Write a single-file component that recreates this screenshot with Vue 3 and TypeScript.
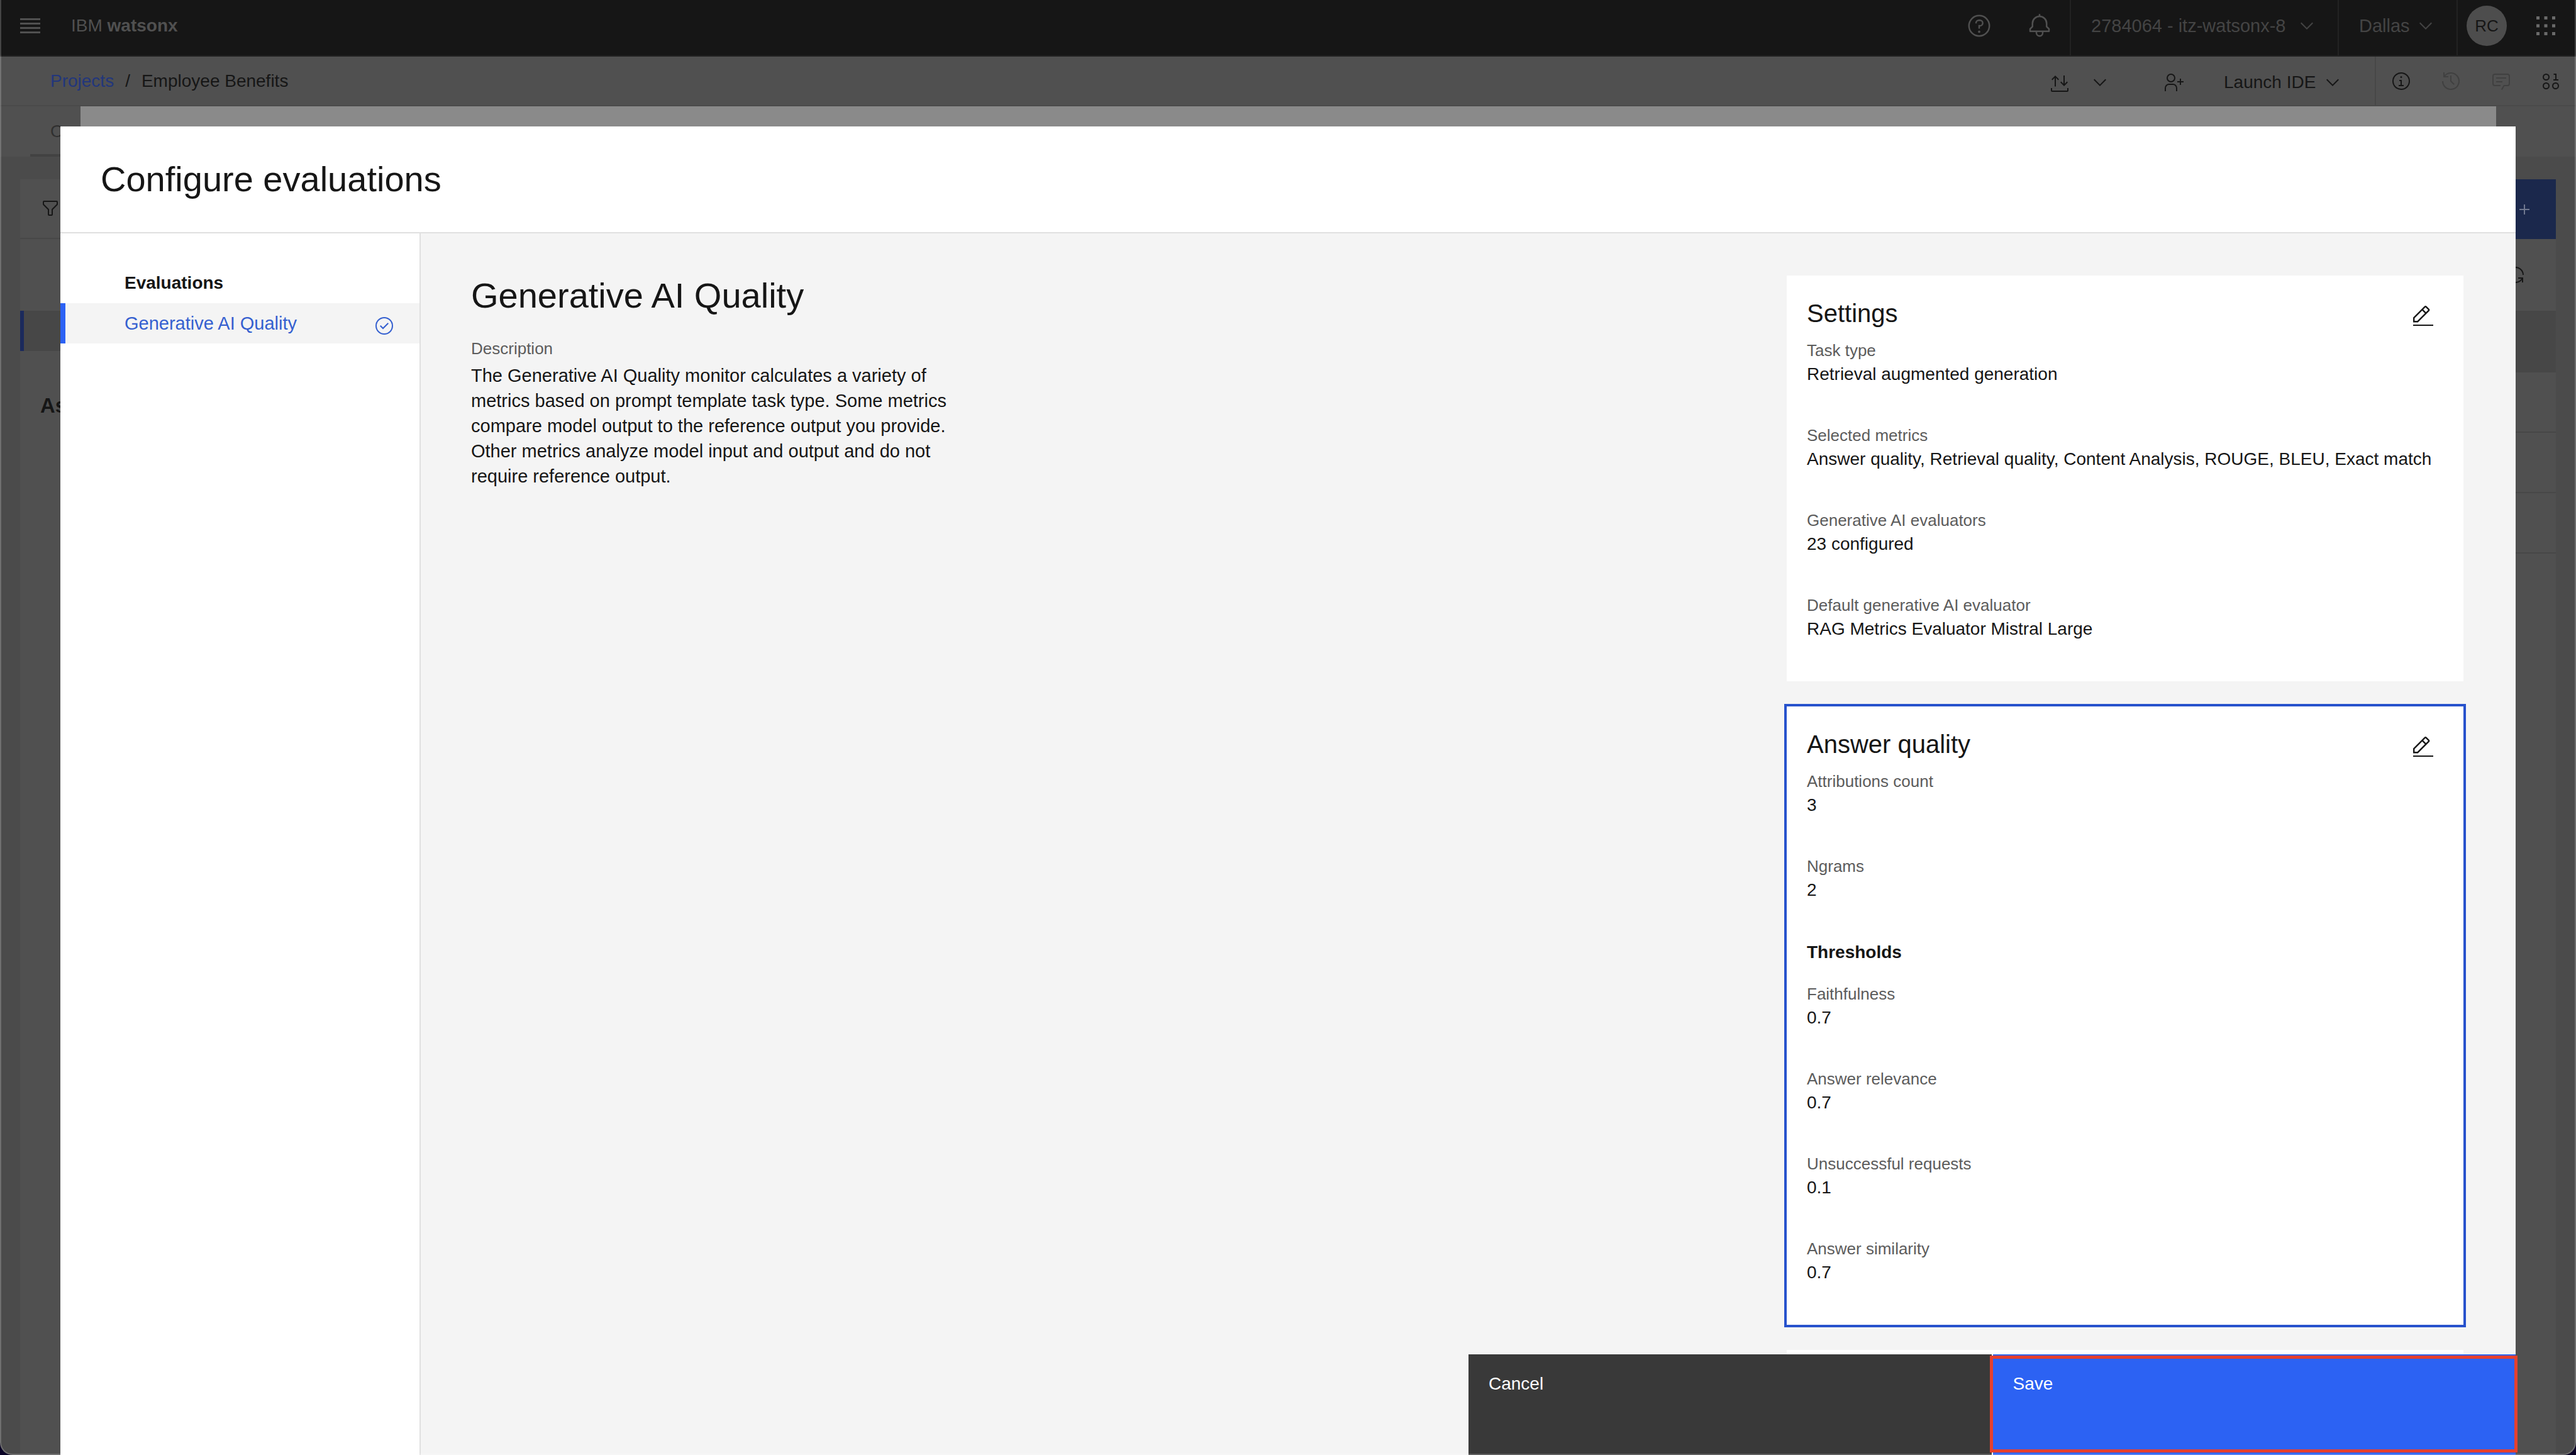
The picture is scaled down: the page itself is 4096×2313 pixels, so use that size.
<script setup lang="ts">
import { h } from 'vue'

interface Field {
  label: string
  value: string
}

interface Card {
  title: string
  fields: Field[]
  thresholds: Field[]
  active: boolean
}

const RING = 'M16 2a14 14 0 1 0 14 14A14 14 0 0 0 16 2zm0 26a12 12 0 1 1 12-12 12 12 0 0 1-12 12z'

const icons: Record<string, string[]> = {
  menu: ['M0 4h32v3H0zM0 11h32v3H0zM0 18h32v3H0zM0 25h32v3H0z'],
  help: [
    RING,
    'M16 22a1.5 1.5 0 1 0 1.5 1.5A1.5 1.5 0 0 0 16 22z',
    'M17 8h-1.500A4.490 4.490 0 0 0 11 12.500V13h2v-.5A2.500 2.500 0 0 1 15.500 10H17a2.500 2.500 0 0 1 0 5h-2v4.500h2V17a4.500 4.500 0 0 0 0-9z',
  ],
  bell: [
    'M28.707 19.293L26 16.586V13a10.014 10.014 0 0 0-9-9.950V1h-2v2.050A10.014 10.014 0 0 0 6 13v3.586l-2.707 2.707A1 1 0 0 0 3 20v3a1 1 0 0 0 1 1h7v.777a5.152 5.152 0 0 0 4.500 5.199A5.006 5.006 0 0 0 21 25v-1h7a1 1 0 0 0 1-1v-3a1 1 0 0 0-.293-.707zM19 25a3 3 0 0 1-6 0v-1h6zm8-3H5v-1.586l2.707-2.707A1 1 0 0 0 8 17v-4a8 8 0 0 1 16 0v4a1 1 0 0 0 .293.707L27 20.414z',
  ],
  chevron: ['M16 22L6 12l1.400-1.400 8.600 8.600 8.600-8.600L26 12z'],
  grid: ['M1 1h5v5H1zM13.500 1h5v5h-5zM26 1h5v5h-5zM1 13.500h5v5H1zM13.500 13.500h5v5h-5zM26 13.500h5v5h-5zM1 26h5v5H1zM13.500 26h5v5h-5zM26 26h5v5h-5z'],
  transfer: [
    'M8 22.500V8.800L4.400 12.400 3 11l6-6 6 6-1.400 1.400L10 8.800v13.700z',
    'M22 5v13.200l-3.600-3.600L17 16l6 6 6-6-1.400-1.400-3.600 3.600V5z',
    'M2 25h2v4h24v-4h2v4a2 2 0 0 1-2 2H4a2 2 0 0 1-2-2z',
  ],
  addUser: [
    'M32 14h-4v-4h-2v4h-4v2h4v4h2v-4h4z',
    'M12 4a5 5 0 1 1-5 5 5 5 0 0 1 5-5m0-2a7 7 0 1 0 7 7 7 7 0 0 0-7-7z',
    'M22 30h-2v-5a5 5 0 0 0-5-5H9a5 5 0 0 0-5 5v5H2v-5a7 7 0 0 1 7-7h6a7 7 0 0 1 7 7z',
  ],
  info: [
    RING,
    'M17 22v-8h-4v2h2v6h-3v2h8v-2z',
    'M16 8a1.500 1.500 0 1 0 1.500 1.500A1.500 1.500 0 0 0 16 8z',
  ],
  history: [
    'M20.590 22L15 16.410V7h2v8.580l5 5.010z',
    'M16 2A13.940 13.940 0 0 0 6 6.230V2H4v8h8V8H7.080A12 12 0 1 1 4 16H2A14 14 0 1 0 16 2z',
  ],
  comment: [
    'M17.740 30L16 29l4-7h6a2 2 0 0 0 2-2V8a2 2 0 0 0-2-2H6a2 2 0 0 0-2 2v12a2 2 0 0 0 2 2h9v2H6a4 4 0 0 1-4-4V8a4 4 0 0 1 4-4h20a4 4 0 0 1 4 4v12a4 4 0 0 1-4 4h-4.840z',
    'M8 10h16v2H8zM8 16h10v2H8z',
  ],
  binary: [
    'M8.500 4a5.500 5.500 0 1 0 0 11 5.500 5.500 0 1 0 0-11zm0 2a3.500 3.500 0 1 1 0 7 3.500 3.500 0 1 1 0-7z',
    'M8.500 18a5.500 5.500 0 1 0 0 11 5.500 5.500 0 1 0 0-11zm0 2a3.500 3.500 0 1 1 0 7 3.500 3.500 0 1 1 0-7z',
    'M23.500 18a5.500 5.500 0 1 0 0 11 5.500 5.500 0 1 0 0-11zm0 2a3.500 3.500 0 1 1 0 7 3.500 3.500 0 1 1 0-7z',
    'M20 15v-2h3V6h-2.500V4H25v9h3v2z',
  ],
  filter: [
    'M18 28h-4a2 2 0 0 1-2-2v-7.590L4.590 11A2 2 0 0 1 4 9.590V6a2 2 0 0 1 2-2h20a2 2 0 0 1 2 2v3.590A2 2 0 0 1 27.410 11L20 18.410V26a2 2 0 0 1-2 2zM6 6v3.590l8 8V26h4v-8.410l8-8V6z',
  ],
  plus: ['M17 15V8h-2v7H8v2h7v7h2v-7h7v-2z'],
  renew: [
    'M12 10H6.780A11 11 0 0 1 27 16h2A13 13 0 0 0 6 7.680V4H4v8h8z',
    'M20 22h5.220A11 11 0 0 1 5 16H3a13 13 0 0 0 23 8.320V28h2v-8h-8z',
  ],
  check: [RING, 'M14 21.414l-5-5.001L10.413 15 14 18.586 21.585 11 23 12.415z'],
  edit: [
    'M0 30h32v2H0z',
    'M25.700 8.400c.9-.9.9-2.400 0-3.400L21.400.7c-.9-.9-2.400-.9-3.400 0l-18 18v7.700h7.700zM19.700 2.400L24 6.700l-3.600 3.600L16.100 6zM2.400 24v-4.300l12-12L18.700 12l-12 12z',
  ],
}

const Icon = (props: { name: string }) =>
  h(
    'svg',
    { viewBox: '0 0 32 32', fill: 'currentColor', 'fill-rule': 'evenodd', 'aria-hidden': 'true' },
    icons[props.name].map((d) => h('path', { d })),
  )
Icon.props = ['name']

const cards: Card[] = [
  {
    title: 'Settings',
    active: false,
    fields: [
      { label: 'Task type', value: 'Retrieval augmented generation' },
      {
        label: 'Selected metrics',
        value: 'Answer quality, Retrieval quality, Content Analysis, ROUGE, BLEU, Exact match',
      },
      { label: 'Generative AI evaluators', value: '23 configured' },
      { label: 'Default generative AI evaluator', value: 'RAG Metrics Evaluator Mistral Large' },
    ],
    thresholds: [],
  },
  {
    title: 'Answer quality',
    active: true,
    fields: [
      { label: 'Attributions count', value: '3' },
      { label: 'Ngrams', value: '2' },
    ],
    thresholds: [
      { label: 'Faithfulness', value: '0.7' },
      { label: 'Answer relevance', value: '0.7' },
      { label: 'Unsuccessful requests', value: '0.1' },
      { label: 'Answer similarity', value: '0.7' },
    ],
  },
]
</script>

<template>
  <div class="window">
    <header class="topbar">
      <button class="menu" aria-label="Menu"><Icon class="icon" name="menu" /></button>
      <span class="brand">IBM <b>watsonx</b></span>
      <div class="top-right">
        <button class="top-cell" aria-label="Help"><Icon class="icon large" name="help" /></button>
        <button class="top-cell" aria-label="Notifications"><Icon class="icon large" name="bell" /></button>
        <button class="switcher account">2784064 - itz-watsonx-8<Icon class="icon" name="chevron" /></button>
        <button class="switcher region">Dallas<Icon class="icon" name="chevron" /></button>
        <button class="top-cell user" aria-label="Profile"><span class="avatar">RC</span></button>
        <button class="top-cell apps" aria-label="Apps"><Icon class="icon" name="grid" /></button>
      </div>
    </header>

    <div class="subbar">
      <nav class="crumbs" aria-label="Breadcrumb">
        <a href="#">Projects</a><span>/</span><span>Employee Benefits</span>
      </nav>
      <div class="actions">
        <button class="transfer" aria-label="Import or export">
          <Icon class="icon" name="transfer" /><Icon class="icon" name="chevron" />
        </button>
        <button class="collab" aria-label="Add collaborators"><Icon class="icon" name="addUser" /></button>
        <button class="launch">Launch IDE<Icon class="icon" name="chevron" /></button>
      </div>
      <div class="panels">
        <button aria-label="Information"><Icon class="icon" name="info" /></button>
        <button class="off" aria-label="History"><Icon class="icon" name="history" /></button>
        <button class="off" aria-label="Comments"><Icon class="icon" name="comment" /></button>
        <button aria-label="Data"><Icon class="icon" name="binary" /></button>
      </div>
    </div>

    <div class="tabs"><a class="tab" href="#">Overview</a></div>

    <div class="workspace">
      <aside class="types">
        <div class="filter"><Icon class="icon" name="filter" /></div>
        <div class="selected"></div>
        <h3>Asset types</h3>
      </aside>
      <section class="assets">
        <div class="toolbar">
          <button class="new" aria-label="New asset"><Icon class="icon" name="plus" /></button>
        </div>
        <div class="refresh"><Icon class="icon" name="renew" /></div>
        <div class="table-head"></div>
        <div v-for="n in 3" :key="n" class="table-row"></div>
      </section>
    </div>

    <div class="sheet"></div>

    <section class="modal" role="dialog" aria-labelledby="modal-title">
      <header class="modal-head"><h1 id="modal-title">Configure evaluations</h1></header>
      <div class="modal-body">
        <nav class="side" aria-label="Evaluations">
          <h2>Evaluations</h2>
          <a class="side-item" href="#">Generative AI Quality<Icon class="icon" name="check" /></a>
        </nav>
        <main class="content">
          <div class="about">
            <h2>Generative AI Quality</h2>
            <p class="label">Description</p>
            <p class="description">
              The Generative AI Quality monitor calculates a variety of metrics based on prompt template task type.
              Some metrics compare model output to the reference output you provide. Other metrics analyze model input
              and output and do not require reference output.
            </p>
          </div>
          <div class="cards">
            <article v-for="card in cards" :key="card.title" class="card" :class="{ active: card.active }">
              <div class="card-head">
                <h3>{{ card.title }}</h3>
                <button :aria-label="'Edit ' + card.title"><Icon class="icon" name="edit" /></button>
              </div>
              <dl>
                <div v-for="f in card.fields" :key="f.label" class="field">
                  <dt class="label">{{ f.label }}</dt>
                  <dd>{{ f.value }}</dd>
                </div>
              </dl>
              <template v-if="card.thresholds.length">
                <h4>Thresholds</h4>
                <dl>
                  <div v-for="f in card.thresholds" :key="f.label" class="field">
                    <dt class="label">{{ f.label }}</dt>
                    <dd>{{ f.value }}</dd>
                  </div>
                </dl>
              </template>
            </article>
            <article class="card"></article>
          </div>
        </main>
      </div>
      <footer class="modal-foot">
        <button class="cancel">Cancel</button>
        <button class="save">Save</button>
      </footer>
    </section>
    <div class="frame"></div>
  </div>
</template>

<style>
body {
  margin: 0;
  background: #0a0326;
}
</style>

<style scoped>
.window {
  position: relative;
  display: flex;
  flex-direction: column;
  height: 100vh;
  overflow: hidden;
  border-radius: 0 0 20px 20px;
  background: #4b4b4b;
  color: #161616;
  font-family: 'Liberation Sans', Arial, sans-serif;
  font-size: 28px;
  line-height: 40px;
}
.window *,
.window {
  box-sizing: border-box;
}
h1,
h2,
h3,
h4,
p,
dl,
dd {
  margin: 0;
  font-weight: 400;
}
button {
  display: flex;
  align-items: center;
  margin: 0;
  padding: 0;
  border: 0;
  background: none;
  color: inherit;
  font: inherit;
  text-align: left;
}
a {
  color: inherit;
  text-decoration: none;
}
.icon {
  flex: none;
  display: block;
  width: 32px;
  height: 32px;
}
.icon.large {
  width: 40px;
  height: 40px;
}

/* Dimmed application chrome */
.topbar {
  flex: none;
  display: flex;
  height: 90px;
  border-bottom: 2px solid #212121;
  background: #161616;
  color: #505050;
}
.menu {
  padding: 0 49px 6px 32px;
}
.brand {
  padding-top: 21px;
}
.top-right {
  display: flex;
  margin-left: auto;
}
.top-cell {
  justify-content: center;
  width: 96px;
  padding-bottom: 6px;
}
.switcher {
  justify-content: space-between;
  padding: 0 33px 6px 32px;
  border-left: 2px solid #222;
  color: #444;
  font-size: 29px;
}
.account {
  width: 426px;
}
.region {
  width: 189px;
}
.user {
  width: 94px;
  border-left: 2px solid #222;
}
.avatar {
  width: 64px;
  height: 64px;
  border-radius: 50%;
  background: #4d4d4d;
  color: #161616;
  font-size: 26px;
  line-height: 64px;
  text-align: center;
}
.apps {
  color: #6a6a6a;
}
.subbar {
  flex: none;
  display: flex;
  height: 79px;
  border-bottom: 2px solid #4a4a4a;
  background: #505050;
}
.crumbs {
  display: flex;
  align-items: center;
  gap: 18px;
  padding-left: 80px;
}
.crumbs a {
  color: #22367c;
}
.actions {
  display: flex;
  margin-left: auto;
  padding-top: 5px;
}
.transfer {
  gap: 32px;
  padding-right: 53px;
}
.collab {
  justify-content: center;
  width: 96px;
}
.launch {
  justify-content: space-between;
  width: 272px;
  padding: 0 51px 0 32px;
}
.panels {
  display: flex;
  width: 320px;
  border-left: 2px solid #474747;
}
.panels button {
  flex: 1;
  justify-content: center;
}
.panels .off {
  color: #404040;
}
.tabs {
  flex: none;
  height: 80px;
  padding-left: 48px;
  background: #505050;
}
.tab {
  display: block;
  width: 288px;
  height: 80px;
  padding: 20px 32px 0;
  border-bottom: 4px solid #424242;
  color: #303030;
}
.workspace {
  flex: 1;
  display: flex;
  margin: 36px 32px 0;
  background: #505050;
}
.types {
  width: 520px;
}
.filter {
  height: 95px;
  padding: 30px 32px 0;
  border-bottom: 2px solid #474747;
}
.selected {
  height: 64px;
  margin-top: 114px;
  border-left: 6px solid #1b2a5c;
  background: #474747;
}
.types h3 {
  margin-top: 67px;
  padding-left: 32px;
  font-weight: 700;
}
.assets {
  flex: 1;
}
.toolbar {
  display: flex;
  justify-content: flex-end;
  height: 95px;
}
.new {
  justify-content: flex-end;
  width: 272px;
  padding-right: 34px;
  background: #1b284c;
  color: #70788f;
}
.refresh {
  display: flex;
  justify-content: flex-end;
  height: 114px;
  padding: 41px 48px 0;
}
.table-head {
  height: 98px;
  background: #474747;
}
.table-row {
  height: 96px;
  border-bottom: 2px solid #474747;
}
.sheet {
  position: absolute;
  inset: 169px 127px 0 128px;
  background: #8a8a8a;
}

/* Evaluation dialog */
.modal {
  position: absolute;
  inset: 201px 96px 0;
  display: flex;
  flex-direction: column;
  background: #fff;
}
.modal-head {
  flex: none;
  padding: 52px 64px;
  border-bottom: 2px solid #e0e0e0;
}
h1,
.about h2 {
  font-size: 56px;
  line-height: 64px;
}
.modal-body {
  flex: 1;
  display: flex;
  min-height: 0;
}
.side {
  flex: none;
  width: 573px;
  padding-top: 59px;
  border-right: 2px solid #e0e0e0;
}
.side h2 {
  padding-left: 102px;
  font-size: 28px;
  font-weight: 700;
}
.side-item {
  display: flex;
  align-items: flex-end;
  justify-content: space-between;
  margin-top: 12px;
  padding: 12px 40px 12px 94px;
  border-left: 8px solid #2c62f5;
  background: #f4f4f4;
  color: #3560d0;
  font-size: 29px;
}
.content {
  flex: 1;
  display: flex;
  justify-content: space-between;
  padding: 67px 83px 0 80px;
  overflow: hidden;
  background: #f4f4f4;
}
.about {
  width: 768px;
}
.label {
  color: #5c5c5c;
  font-size: 26px;
  line-height: 36px;
}
.about .label {
  margin-top: 34px;
}
.description {
  margin-top: 5px;
  font-size: 29px;
}
.cards {
  display: flex;
  flex-direction: column;
  gap: 40px;
  width: 1076px;
}
.card {
  flex: none;
  padding: 36px 32px 4px;
  background: #fff;
}
.card.active {
  outline: 4px solid #2752cc;
}
.card-head {
  display: flex;
  align-items: flex-end;
  justify-content: space-between;
  margin-bottom: 17px;
}
.card-head h3 {
  font-size: 40px;
  line-height: 48px;
}
.card-head button {
  padding: 0 16px 4px;
}
.field {
  margin-bottom: 59px;
}
.card h4 {
  margin-bottom: 28px;
  font-weight: 700;
}
.modal-foot {
  position: absolute;
  right: 0;
  bottom: 0;
  display: flex;
  gap: 2px;
  width: 1665px;
  height: 160px;
  background: #fff;
  color: #fff;
}
.modal-foot button {
  flex: 1;
  align-items: flex-start;
  padding: 27px 32px 0;
}
.cancel {
  background: #393939;
}
.save {
  position: relative;
  background: #2c62f3;
}
.save::after {
  content: '';
  position: absolute;
  inset: 2px -3px 4px -5px;
  border: 5px solid #e5402e;
}

/* Hairline around the browser window */
.frame {
  position: absolute;
  inset: 0;
  border: 2px solid rgba(255, 255, 255, 0.2);
  border-top: 0;
  border-radius: 0 0 20px 20px;
  pointer-events: none;
}
</style>
